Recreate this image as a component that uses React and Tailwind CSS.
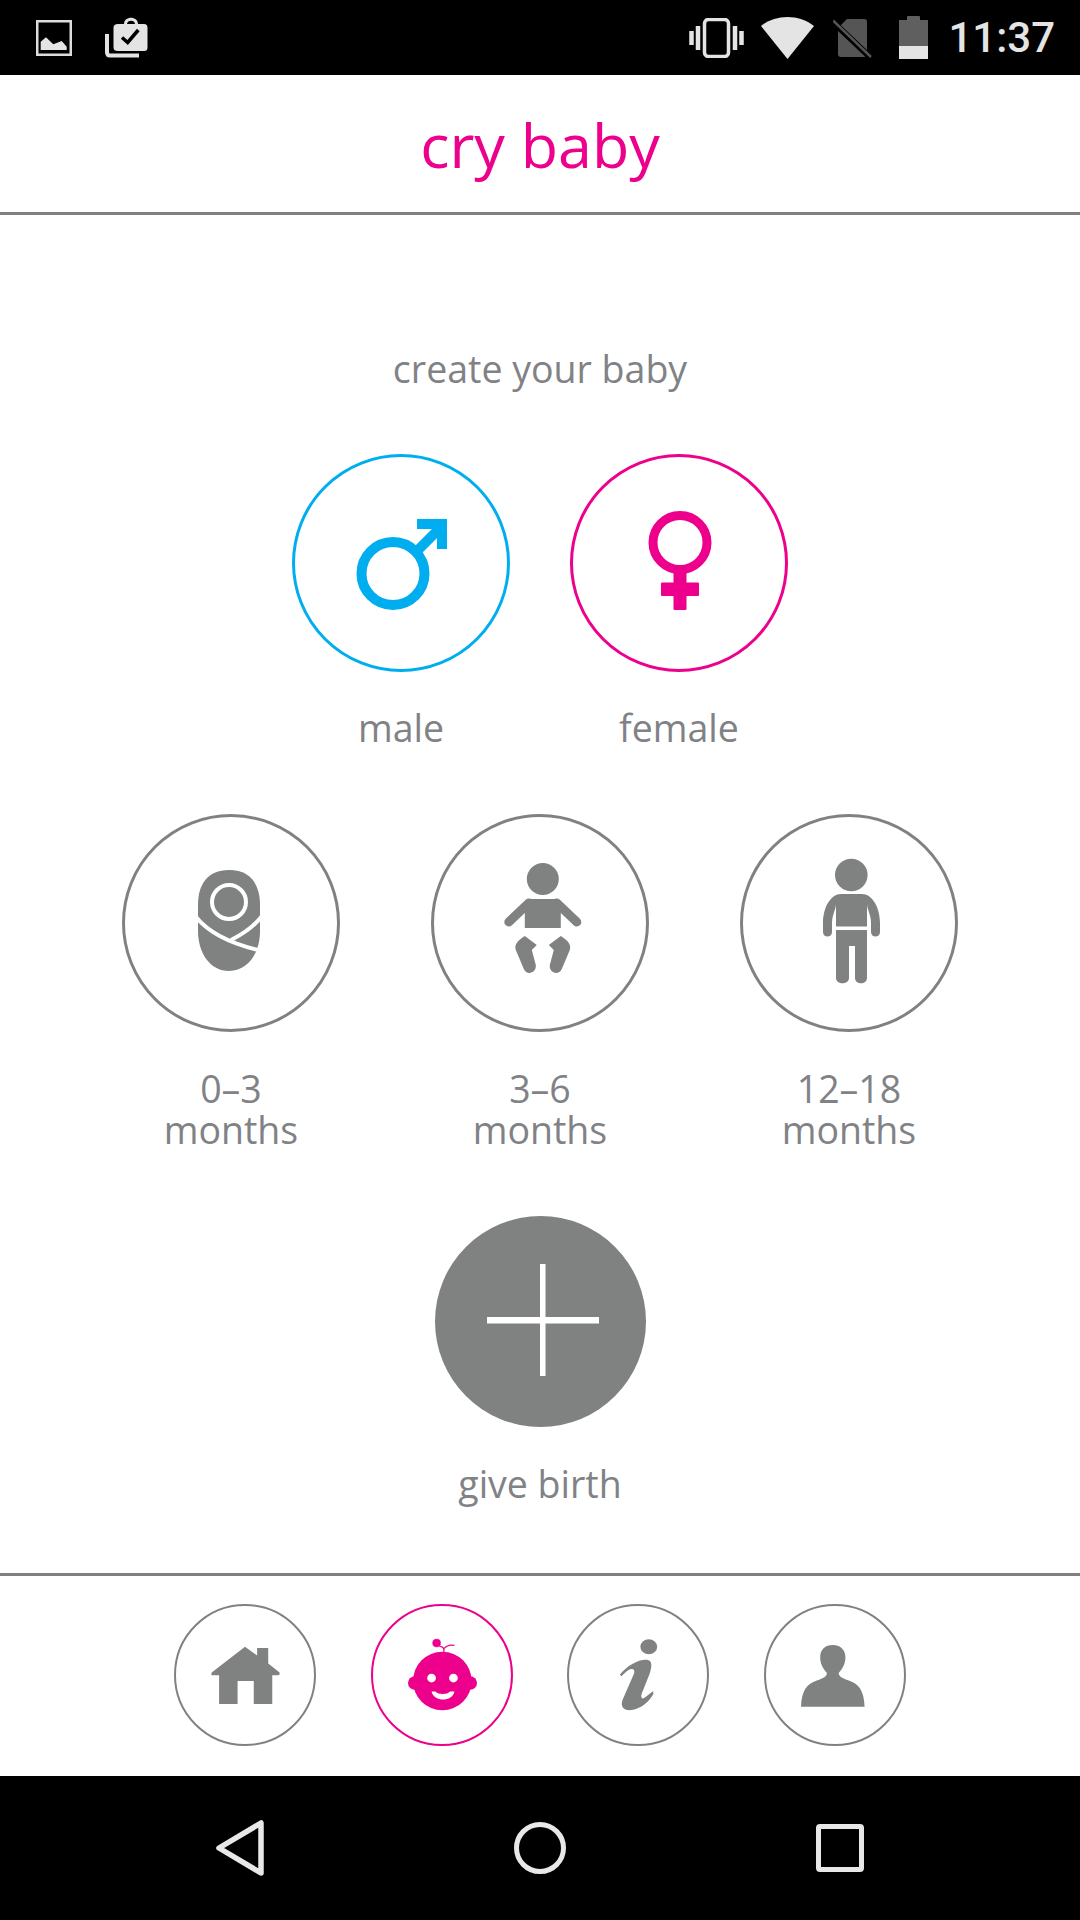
import React from 'react';

const labelFont = { fontFamily: '"Open Sans", sans-serif' };

const GRAY = '#808282';
const PINK = '#ec008c';
const BLUE = '#00aeef';

// big circle icons, coords are px offsets from the middle of the circle
const MaleIcon = () => (
  <svg viewBox="-106 -106 212 212" className="w-full h-full" fill={BLUE}>
    <circle cx="-8" cy="10.5" r="31.5" fill="none" stroke={BLUE} strokeWidth="10" />
    <path d="M15 -11 L38 -34" stroke={BLUE} strokeWidth="10" />
    <path d="M16 -44 H46 V-14 H36 V-34 H16 Z" />
  </svg>
);

const FemaleIcon = () => (
  <svg viewBox="-106 -106 212 212" className="w-full h-full" fill={PINK}>
    <circle cx="1" cy="-20.5" r="27" fill="none" stroke={PINK} strokeWidth="9" />
    <rect x="-5.5" y="8" width="13" height="39" rx="1" />
    <rect x="-18" y="19.5" width="38" height="13.5" rx="1" />
  </svg>
);

const SwaddleIcon = () => (
  <svg viewBox="-106 -106 212 212" className="w-full h-full" fill={GRAY}>
    <path d="M-2 -53 C20 -53 29 -38 29 -18 L29 8 C29 30 17 48 -2 48 C-21 48 -33 30 -33 8 L-33 -18 C-33 -38 -24 -53 -2 -53 Z" />
    <circle cx="-2" cy="-21" r="17" fill="none" stroke="#fff" strokeWidth="4" />
    <path d="M-35 -6 C-22 10 -2 20 27 27" fill="none" stroke="#fff" strokeWidth="4" />
    <path d="M31 -7 C22 5 10 12 0 17" fill="none" stroke="#fff" strokeWidth="4" />
  </svg>
);

const BabyIcon = () => (
  <svg viewBox="-106 -106 212 212" className="w-full h-full" fill={GRAY}>
    <g transform="translate(2.8 0)">
      <circle cx="0" cy="-44" r="16" />
      <path d="M-13 -24 H13 L18 -19 V5 H-18 V-19 Z" />
      <path d="M14 -20 L34 -1" fill="none" stroke={GRAY} strokeWidth="9" strokeLinecap="round" />
      <path d="M-14 -20 L-34 -1" fill="none" stroke={GRAY} strokeWidth="9" strokeLinecap="round" />
      <path d="M18 13 L6 22 L11 27 L7 42 C6 50 16 53 19 46 L27 27 C29 21 24 17 18 13 Z" />
      <path d="M-18 13 L-6 22 L-11 27 L-7 42 C-6 50 -16 53 -19 46 L-27 27 C-29 21 -24 17 -18 13 Z" />
    </g>
  </svg>
);

const ChildIcon = () => (
  <svg viewBox="-106 -106 212 212" className="w-full h-full" fill={GRAY}>
    <circle cx="2.3" cy="-48" r="16.3" />
    <path d="M-13 3.5 V-19 C-13 -14 -17 -8 -17 0 V9 C-17 15 -26 15 -26 9 V0 C-26 -16 -18 -29 -8 -29 H13 C23 -29 31 -16 31 0 V9 C31 15 22 15 22 9 V0 C22 -8 18 -14 18 -19 V3.5 Z" />
    <path d="M-13 7 H18 V55 C18 62 6 62 6 55 V23 H0 V55 C0 62 -13 62 -13 55 Z" />
  </svg>
);

// nav icons use the coordinates read off the 3x crops
const HomeIcon = () => (
  <svg viewBox="79 79 410 410" className="w-full h-full" fill={GRAY}>
    <path d="M284 200 L320 226 V204 H353 V250 L386 276 Q390 285 380 285 H365 V370 H310 V302 H262 V370 H207 V285 H190 Q180 285 186 276 Z" />
  </svg>
);

const FaceIcon = () => (
  <svg viewBox="669 79 410 410" className="w-full h-full" fill={PINK}>
    <circle cx="875" cy="302" r="87" />
    <circle cx="793" cy="308" r="20" />
    <circle cx="958" cy="308" r="20" />
    <circle cx="858" cy="189" r="12" stroke={PINK} />
    <path d="M866 198 C880 200 882 208 879 218 M881 205 C888 196 900 194 911 196" fill="none" stroke={PINK} strokeWidth="4" />
    <circle cx="843" cy="293" r="13" fill="#fff" />
    <circle cx="908" cy="293" r="13" fill="#fff" />
    <path d="M843 333 H854 C862 343 890 343 898 333 H911 C905 365 850 365 843 333 Z" fill="#fff" />
  </svg>
);

const InfoIcon = () => (
  <svg viewBox="89 79 410 410" className="w-full h-full" fill={GRAY}>
    <ellipse cx="326" cy="200" rx="25" ry="22" />
    <path d="M240 283 C262 255 298 236 322 239 C338 242 335 262 328 282 L305 340 C301 352 306 357 314 351 C322 345 332 336 339 332 L340 340 C328 362 306 384 275 388 C252 391 241 378 248 358 L282 280 C287 266 275 262 265 270 C258 275 250 282 245 288 Z" />
  </svg>
);

const PersonIcon = () => (
  <svg viewBox="679 79 410 410" className="w-full h-full" fill={GRAY}>
    <path d="M783 378 C785 330 800 310 830 300 C850 294 860 288 860 278 C848 265 840 250 840 232 C840 208 855 195 877 195 C899 195 915 208 915 232 C915 250 907 265 895 278 C895 288 905 294 925 300 C955 310 970 330 972 378 Z" />
  </svg>
);

const Choice = ({ icon, lines, color = 'border-[#808282]', labelTop = 'mt-[36px]' }) => (
  <div className="flex flex-col items-center w-[218px]">
    <div className={`w-[218px] h-[218px] rounded-full border-[3px] ${color}`}>{icon}</div>
    <div className={`${labelTop} text-[37.5px] font-medium leading-[41px] text-[#808285] text-center`} style={labelFont}>
      {lines.map((l) => <div key={l}>{l}</div>)}
    </div>
  </div>
);

const NavBtn = ({ icon, color = 'border-[#808282]' }) => (
  <div className={`w-[142px] h-[142px] rounded-full border-[2.5px] ${color}`}>{icon}</div>
);

const StatusBar = () => (
  <div className="h-[75px] bg-black flex items-center shrink-0">
    <svg viewBox="0 0 36 36" className="w-[36px] h-[36px] ml-[36px]">
      <rect x="1.25" y="1.25" width="33.5" height="33.5" fill="none" stroke="#dcdcdc" strokeWidth="2.5" />
      <path d="M4.7 30 V21.7 L10 17.3 L17.3 24.3 L25.7 21 L30.7 26.7 V30 Z" fill="#e4e4e4" />
    </svg>
    <svg viewBox="0 0 44 42" className="w-[44px] h-[42px] ml-[33px]">
      <path d="M13 7 H19 C19 -1.5 33 -1.5 33 7 H39 C41.5 7 42.5 8 42.5 11 V30 C42.5 33 41.5 34 39 34 H13 C10 34 8.5 33 8.5 30 V11 C8.5 8 10 7 13 7 Z M22 7 H30 C30 2.5 22 2.5 22 7 Z" fillRule="evenodd" fill="#e4e4e4" />
      <path d="M17 20.5 L22.7 25.5 L33.3 13" fill="none" stroke="#000" strokeWidth="3.5" />
      <path d="M2 17 V35 C2 37.5 3 38.5 5 38.5 H34" fill="none" stroke="#e4e4e4" strokeWidth="4" />
    </svg>
    <svg viewBox="0 0 55 40" className="w-[55px] h-[40px] ml-auto">
      <rect x="15.5" y="1.5" width="24" height="37" rx="4" fill="none" stroke="#e4e4e4" strokeWidth="3.5" />
      <path d="M9 8 V32 M46 8 V32" stroke="#e4e4e4" strokeWidth="4.5" />
      <path d="M2.5 13 V27 M52.5 13 V27" stroke="#e4e4e4" strokeWidth="4.5" />
    </svg>
    <svg viewBox="0 0 53 42" className="w-[53px] h-[42px] ml-[17px]">
      <path d="M0 9 C15 -3 38 -3 53 9 L26.5 42 Z" fill="#e4e4e4" />
    </svg>
    <svg viewBox="0 0 39 40" className="w-[39px] h-[40px] ml-[19px]">
      <path d="M14 1 H31 C33 1 34 2 34 4 V36 C34 38 33 39 31 39 H8 C6 39 5 38 5 36 V10 Z" fill="#555" />
      <path d="M0 4 L38 40" stroke="#000" strokeWidth="6" />
      <path d="M0 2.5 L38 39" stroke="#555" strokeWidth="2.5" />
    </svg>
    <svg viewBox="0 0 29 43" className="w-[29px] h-[43px] ml-[27px]">
      <path d="M8 1 Q8 0 9 0 H20 Q21 0 21 1 V4 H29 V43 H0 V4 H8 Z" fill="#5f5f5f" />
      <rect x="0" y="30" width="29" height="13" fill="#e4e4e4" />
    </svg>
    <span className="ml-[20px] mr-[25px] text-[42px] leading-none text-[#e4e4e4] font-medium" style={{ fontFamily: 'Roboto, sans-serif' }}>11:37</span>
  </div>
);

export default function App() {
  return (
    <div className="w-[1080px] h-[1920px] bg-white flex flex-col overflow-hidden">
      <StatusBar />

      {/* Header */}
      <div className="h-[140px] shrink-0 border-b-[3px] border-[#808080] flex items-center justify-center">
        <h1 className="text-[61px] font-medium leading-none text-[#ec008c] mt-[1px]" style={labelFont}>cry baby</h1>
      </div>

      <div className="flex-1 flex flex-col items-center">
        <div className="mt-[133px] text-[37.5px] font-medium leading-[41px] text-[#808285]" style={labelFont}>create your baby</div>

        <div className="mt-[65px] flex gap-[60px]">
          <Choice icon={<MaleIcon />} lines={['male']} color="border-[#00aeef]" labelTop="mt-[35px]" />
          <Choice icon={<FemaleIcon />} lines={['female']} color="border-[#ec008c]" labelTop="mt-[35px]" />
        </div>

        <div className="mt-[66px] flex gap-[91px]">
          <Choice icon={<SwaddleIcon />} lines={['0–3', 'months']} />
          <Choice icon={<BabyIcon />} lines={['3–6', 'months']} />
          <Choice icon={<ChildIcon />} lines={['12–18', 'months']} />
        </div>

        <div className="mt-[66px] flex flex-col items-center">
          <div className="w-[211px] h-[211px] rounded-full bg-[#808282]">
            <svg viewBox="0 0 211 211" className="w-full h-full" fill="#fff">
              <rect x="105" y="48" width="5.5" height="112" />
              <rect x="52" y="101" width="112" height="6.5" />
            </svg>
          </div>
          <div className="mt-[36px] text-[37.5px] font-medium leading-[41px] text-[#808285]" style={labelFont}>give birth</div>
        </div>
      </div>

      {/* Bottom tabs */}
      <div className="h-[203px] shrink-0 border-t-[3px] border-[#808080] flex justify-center gap-[54.5px] pt-[28px]">
        <NavBtn icon={<HomeIcon />} />
        <NavBtn icon={<FaceIcon />} color="border-[#ec008c]" />
        <NavBtn icon={<InfoIcon />} />
        <NavBtn icon={<PersonIcon />} />
      </div>

      {/* Android nav bar */}
      <div className="h-[144px] shrink-0 bg-black flex items-center justify-center">
        <div className="w-[1080px] flex items-center">
          <svg viewBox="0 0 48 56" className="w-[48px] h-[56px] ml-[216px]">
            <path d="M45 3 V53 L3 28 Z" fill="none" stroke="#e8e8e8" strokeWidth="5.5" strokeLinejoin="round" />
          </svg>
          <div className="w-[52px] h-[52px] rounded-full border-[5.5px] border-[#e8e8e8] ml-[250px]" />
          <div className="w-[48px] h-[48px] rounded-[4px] border-[5.5px] border-[#e8e8e8] ml-[250px]" />
        </div>
      </div>
    </div>
  );
}
